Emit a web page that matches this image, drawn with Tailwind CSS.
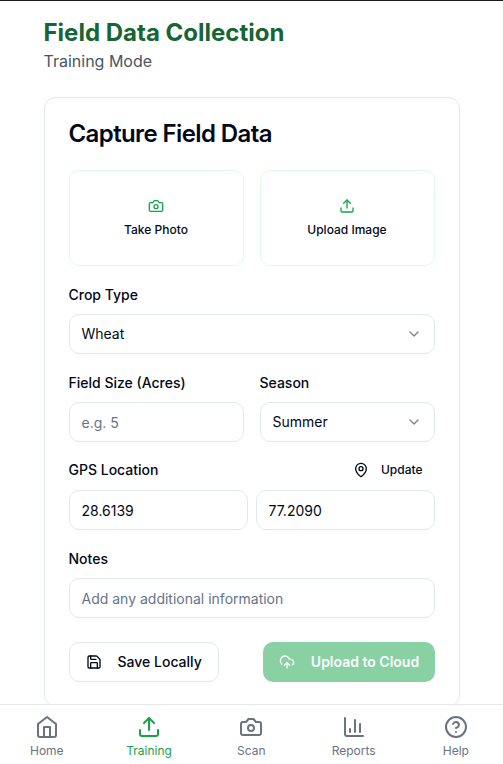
<!DOCTYPE html>
<html lang="en">
<head>
<meta charset="utf-8">
<title>Field Data Collection</title>
<script src="https://cdn.jsdelivr.net/npm/@tailwindcss/browser@4"></script>
</head>
<body class="h-[764px] overflow-hidden bg-white font-['Inter',sans-serif] text-[#020817]">
<div class="flex h-[764px] flex-col border-t border-[#1c1a1c]">
  <main class="h-[703px] overflow-hidden px-[43.5px] pt-4">
    <h1 class="h-[31px] text-2xl leading-8 font-bold text-[#166534]">Field Data Collection</h1>
    <p class="h-6 text-base leading-[26px] text-[#4b5563]">Training Mode</p>
    <section class="mt-[25px] h-[610px] w-[416px] rounded-xl border border-[#e2e8f0] px-6 pt-6">
      <h2 class="text-2xl leading-6 font-semibold tracking-tight">Capture Field Data</h2>
      <div class="mt-6 grid grid-cols-2 gap-4">
        <button class="flex h-24 flex-col items-center justify-center gap-2 rounded-[10px] border border-[#dcfce7] text-xs font-medium">
          <svg class="size-4 text-[#16a34a]" viewBox="0 0 24 24" fill="none" stroke="currentColor" stroke-width="2" stroke-linecap="round" stroke-linejoin="round"><path d="M14.5 4h-5L7 7H4a2 2 0 0 0-2 2v9a2 2 0 0 0 2 2h16a2 2 0 0 0 2-2V9a2 2 0 0 0-2-2h-3l-2.500-3z"/><circle cx="12" cy="13" r="3"/></svg>
          <span>Take Photo</span>
        </button>
        <button class="flex h-24 flex-col items-center justify-center gap-2 rounded-[10px] border border-[#dcfce7] text-xs font-medium">
          <svg class="size-4 text-[#16a34a]" viewBox="0 0 24 24" fill="none" stroke="currentColor" stroke-width="2" stroke-linecap="round" stroke-linejoin="round"><path d="M21 15v4a2 2 0 0 1-2 2H5a2 2 0 0 1-2-2v-4"/><path d="m17 8-5-5-5 5"/><path d="M12 3v12"/></svg>
          <span>Upload Image</span>
        </button>
      </div>
      <div class="mt-6 text-sm">
        <div class="h-6 font-medium leading-[10px]">Crop Type</div>
        <div class="flex h-10 items-center justify-between rounded-[10px] border border-[#e2e8f0] px-3">
          <span>Wheat</span>
          <svg class="size-4 opacity-50" viewBox="0 0 24 24" fill="none" stroke="currentColor" stroke-width="2" stroke-linecap="round" stroke-linejoin="round"><path d="m6 9 6 6 6-6"/></svg>
        </div>
      </div>
      <div class="mt-6 grid grid-cols-2 gap-4 text-sm">
        <div>
          <div class="h-6 font-medium leading-[10px]">Field Size (Acres)</div>
          <input class="block h-10 w-full rounded-[10px] border border-[#e2e8f0] px-3 placeholder:text-[#64748b]" placeholder="e.g. 5">
        </div>
        <div>
          <div class="h-6 font-medium leading-[10px]">Season</div>
          <div class="flex h-10 items-center justify-between rounded-[10px] border border-[#e2e8f0] px-3">
            <span>Summer</span>
            <svg class="size-4 opacity-50" viewBox="0 0 24 24" fill="none" stroke="currentColor" stroke-width="2" stroke-linecap="round" stroke-linejoin="round"><path d="m6 9 6 6 6-6"/></svg>
          </div>
        </div>
      </div>
      <div class="mt-2 text-sm">
        <div class="flex h-10 items-center justify-between">
          <span class="font-medium">GPS Location</span>
          <button class="flex items-center gap-3 px-3 text-xs font-medium">
            <svg class="size-4" viewBox="0 0 24 24" fill="none" stroke="currentColor" stroke-width="2" stroke-linecap="round" stroke-linejoin="round"><path d="M20 10c0 4.993-5.539 10.193-7.399 11.799a1 1 0 0 1-1.202 0C9.539 20.193 4 14.993 4 10a8 8 0 0 1 16 0"/><circle cx="12" cy="10" r="3"/></svg>
            <span>Update</span>
          </button>
        </div>
        <div class="grid grid-cols-2 gap-2">
          <input class="block h-10 w-full rounded-[10px] border border-[#e2e8f0] px-3" value="28.6139">
          <input class="block h-10 w-full rounded-[10px] border border-[#e2e8f0] px-3" value="77.2090">
        </div>
      </div>
      <div class="mt-6 text-sm">
        <div class="h-6 font-medium leading-[10px]">Notes</div>
        <input class="block h-10 w-full rounded-[10px] border border-[#e2e8f0] px-3 placeholder:text-[#64748b]" placeholder="Add any additional information">
      </div>
      <div class="mt-6 flex justify-between text-sm">
        <button class="flex h-10 items-center gap-4 rounded-[10px] border border-[#e2e8f0] px-4 font-medium">
          <svg class="size-4" viewBox="0 0 24 24" fill="none" stroke="currentColor" stroke-width="2" stroke-linecap="round" stroke-linejoin="round"><path d="M15.200 3a2 2 0 0 1 1.400.6l3.800 3.800a2 2 0 0 1 .6 1.400V19a2 2 0 0 1-2 2H5a2 2 0 0 1-2-2V5a2 2 0 0 1 2-2z"/><path d="M17 21v-7a1 1 0 0 0-1-1H8a1 1 0 0 0-1 1v7"/><path d="M7 3v4a1 1 0 0 0 1 1h7"/></svg>
          <span>Save Locally</span>
        </button>
        <button class="flex h-10 w-[172px] items-center justify-center gap-4 rounded-[10px] bg-[#16a34a] pl-px font-semibold whitespace-nowrap text-[#f8fafc] opacity-50">
          <svg class="size-4 shrink-0" viewBox="0 0 24 24" fill="none" stroke="currentColor" stroke-width="2" stroke-linecap="round" stroke-linejoin="round"><path d="M12 13v8"/><path d="M4 14.899A7 7 0 1 1 15.710 8h1.790a4.500 4.500 0 0 1 2.500 8.242"/><path d="m8 17 4-4 4 4"/></svg>
          <span>Upload to Cloud</span>
        </button>
      </div>
    </section>
  </main>
  <nav class="flex h-[60px] justify-between border-t border-[#e5e7eb] pr-[15.1px] pl-[14.8px] pt-2.5 text-xs leading-4 text-[#6b7280]">
    <a class="flex w-16 flex-col items-center gap-1"><svg class="size-6" viewBox="0 0 24 24" fill="none" stroke="currentColor" stroke-width="2" stroke-linecap="round" stroke-linejoin="round"><path d="m3 9 9-7 9 7v11a2 2 0 0 1-2 2H5a2 2 0 0 1-2-2z"/><path d="M9 22V12h6v10"/></svg>Home</a>
    <a class="flex w-16 flex-col items-center gap-1 text-[#16a34a]"><svg class="size-6" viewBox="0 0 24 24" fill="none" stroke="currentColor" stroke-width="2" stroke-linecap="round" stroke-linejoin="round"><path d="M21 15v4a2 2 0 0 1-2 2H5a2 2 0 0 1-2-2v-4"/><path d="m17 8-5-5-5 5"/><path d="M12 3v12"/></svg>Training</a>
    <a class="flex w-16 flex-col items-center gap-1"><svg class="size-6" viewBox="0 0 24 24" fill="none" stroke="currentColor" stroke-width="2" stroke-linecap="round" stroke-linejoin="round"><path d="M14.500 4h-5L7 7H4a2 2 0 0 0-2 2v9a2 2 0 0 0 2 2h16a2 2 0 0 0 2-2V9a2 2 0 0 0-2-2h-3l-2.500-3z"/><circle cx="12" cy="13" r="3"/></svg>Scan</a>
    <a class="flex w-16 flex-col items-center gap-1"><svg class="size-6" viewBox="0 0 24 24" fill="none" stroke="currentColor" stroke-width="2" stroke-linecap="round" stroke-linejoin="round"><path d="M3 3v16a2 2 0 0 0 2 2h16"/><path d="M18 17V9"/><path d="M13 17V5"/><path d="M8 17v-3"/></svg>Reports</a>
    <a class="flex w-16 flex-col items-center gap-1"><svg class="size-6" viewBox="0 0 24 24" fill="none" stroke="currentColor" stroke-width="2" stroke-linecap="round" stroke-linejoin="round"><circle cx="12" cy="12" r="10"/><path d="M9.090 9a3 3 0 0 1 5.830 1c0 2-3 3-3 3"/><path d="M12 17h.01"/></svg>Help</a>
  </nav>
</div>
</body>
</html>
